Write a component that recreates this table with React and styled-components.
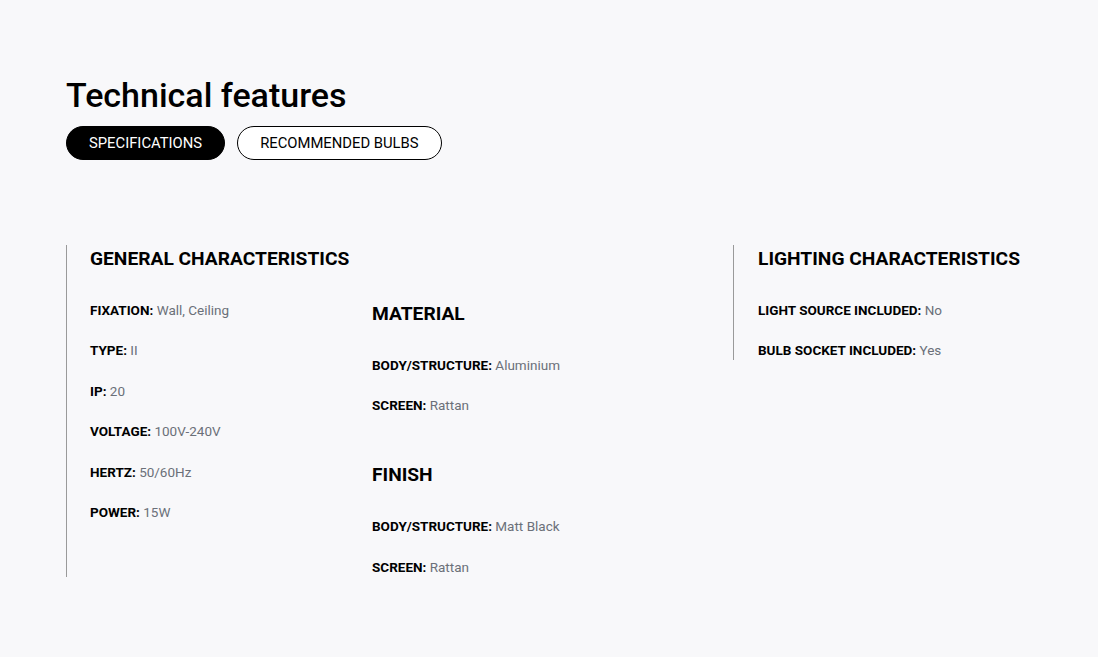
import React from "react";
import styled, { createGlobalStyle } from "styled-components";

const Global = createGlobalStyle`
  html, body { margin: 0; padding: 0; background: #f8f8fa; }
  body { font-family: Roboto, "Liberation Sans", Arial, sans-serif; color: #000; }
`;

const Page = styled.div`
  padding: 75px 66px 60px 66px;
`;

const Title = styled.h1`
  margin: 0;
  font-size: 34px;
  line-height: 40px;
  font-weight: 500;
`;

const Tabs = styled.div`
  display: flex;
  gap: 12px;
  margin-top: 11px;
`;

const Tab = styled.button`
  height: 34px;
  padding: 0 22px;
  border-radius: 17px;
  border: 1px solid #000;
  background: ${(p) => (p.$active ? "#000" : "#fff")};
  color: ${(p) => (p.$active ? "#fff" : "#000")};
  font-family: Roboto, "Liberation Sans", Arial, sans-serif;
  font-size: 14.8px;
  text-transform: uppercase;
  cursor: pointer;
`;

const Grid = styled.div`
  display: flex;
  align-items: flex-start;
  margin-top: 85px;
`;

const Group = styled.div`
  border-left: 1px solid #9a9a9a;
  padding-left: ${(p) => p.$pad}px;
  width: ${(p) => p.$width}px;
  box-sizing: border-box;
  display: flex;
`;

const Column = styled.div`
  width: ${(p) => (p.$width ? `${p.$width}px` : "auto")};
  flex: ${(p) => (p.$width ? "none" : "1")};
  padding-top: ${(p) => p.$top || 0}px;
`;

const Heading = styled.h3`
  margin: ${(p) => p.$gap || 0}px 0 28px 0;
  padding-top: 1px;
  font-size: 19.2px;
  line-height: 26px;
  font-weight: 700;
  text-transform: uppercase;
  white-space: nowrap;
`;

const Row = styled.div`
  font-size: 13.5px;
  line-height: 20px;
  margin-bottom: 20.4px;
  white-space: nowrap;
  &:last-child { margin-bottom: 0; }
`;

const Label = styled.span`
  font-weight: 700;
`;

const Value = styled.span`
  color: #6b7079;
`;

const Spec = ({ label, value }) => (
  <Row>
    <Label>{label}:</Label> <Value>{value}</Value>
  </Row>
);

const Block = styled.div``;

export default function App() {
  return (
    <>
      <Global />
      <Page>
        <Title>Technical features</Title>
        <Tabs>
          <Tab $active>Specifications</Tab>
          <Tab>Recommended bulbs</Tab>
        </Tabs>
        <Grid>
          <Group $width={667} $pad={23}>
            <Column $width={282}>
              <Heading>General characteristics</Heading>
              <Block>
                <Spec label="FIXATION" value="Wall, Ceiling" />
                <Spec label="TYPE" value="II" />
                <Spec label="IP" value="20" />
                <Spec label="VOLTAGE" value="100V-240V" />
                <Spec label="HERTZ" value="50/60Hz" />
                <Spec label="POWER" value="15W" />
              </Block>
            </Column>
            <Column $top={55}>
              <Heading>Material</Heading>
              <Block>
                <Spec label="BODY/STRUCTURE" value="Aluminium" />
                <Spec label="SCREEN" value="Rattan" />
              </Block>
              <Heading $gap={46}>Finish</Heading>
              <Block>
                <Spec label="BODY/STRUCTURE" value="Matt Black" />
                <Spec label="SCREEN" value="Rattan" />
              </Block>
            </Column>
          </Group>
          <Group $width={299} $pad={24}>
            <Column>
              <Heading>Lighting characteristics</Heading>
              <Block>
                <Spec label="LIGHT SOURCE INCLUDED" value="No" />
                <Spec label="BULB SOCKET INCLUDED" value="Yes" />
              </Block>
            </Column>
          </Group>
        </Grid>
      </Page>
    </>
  );
}
